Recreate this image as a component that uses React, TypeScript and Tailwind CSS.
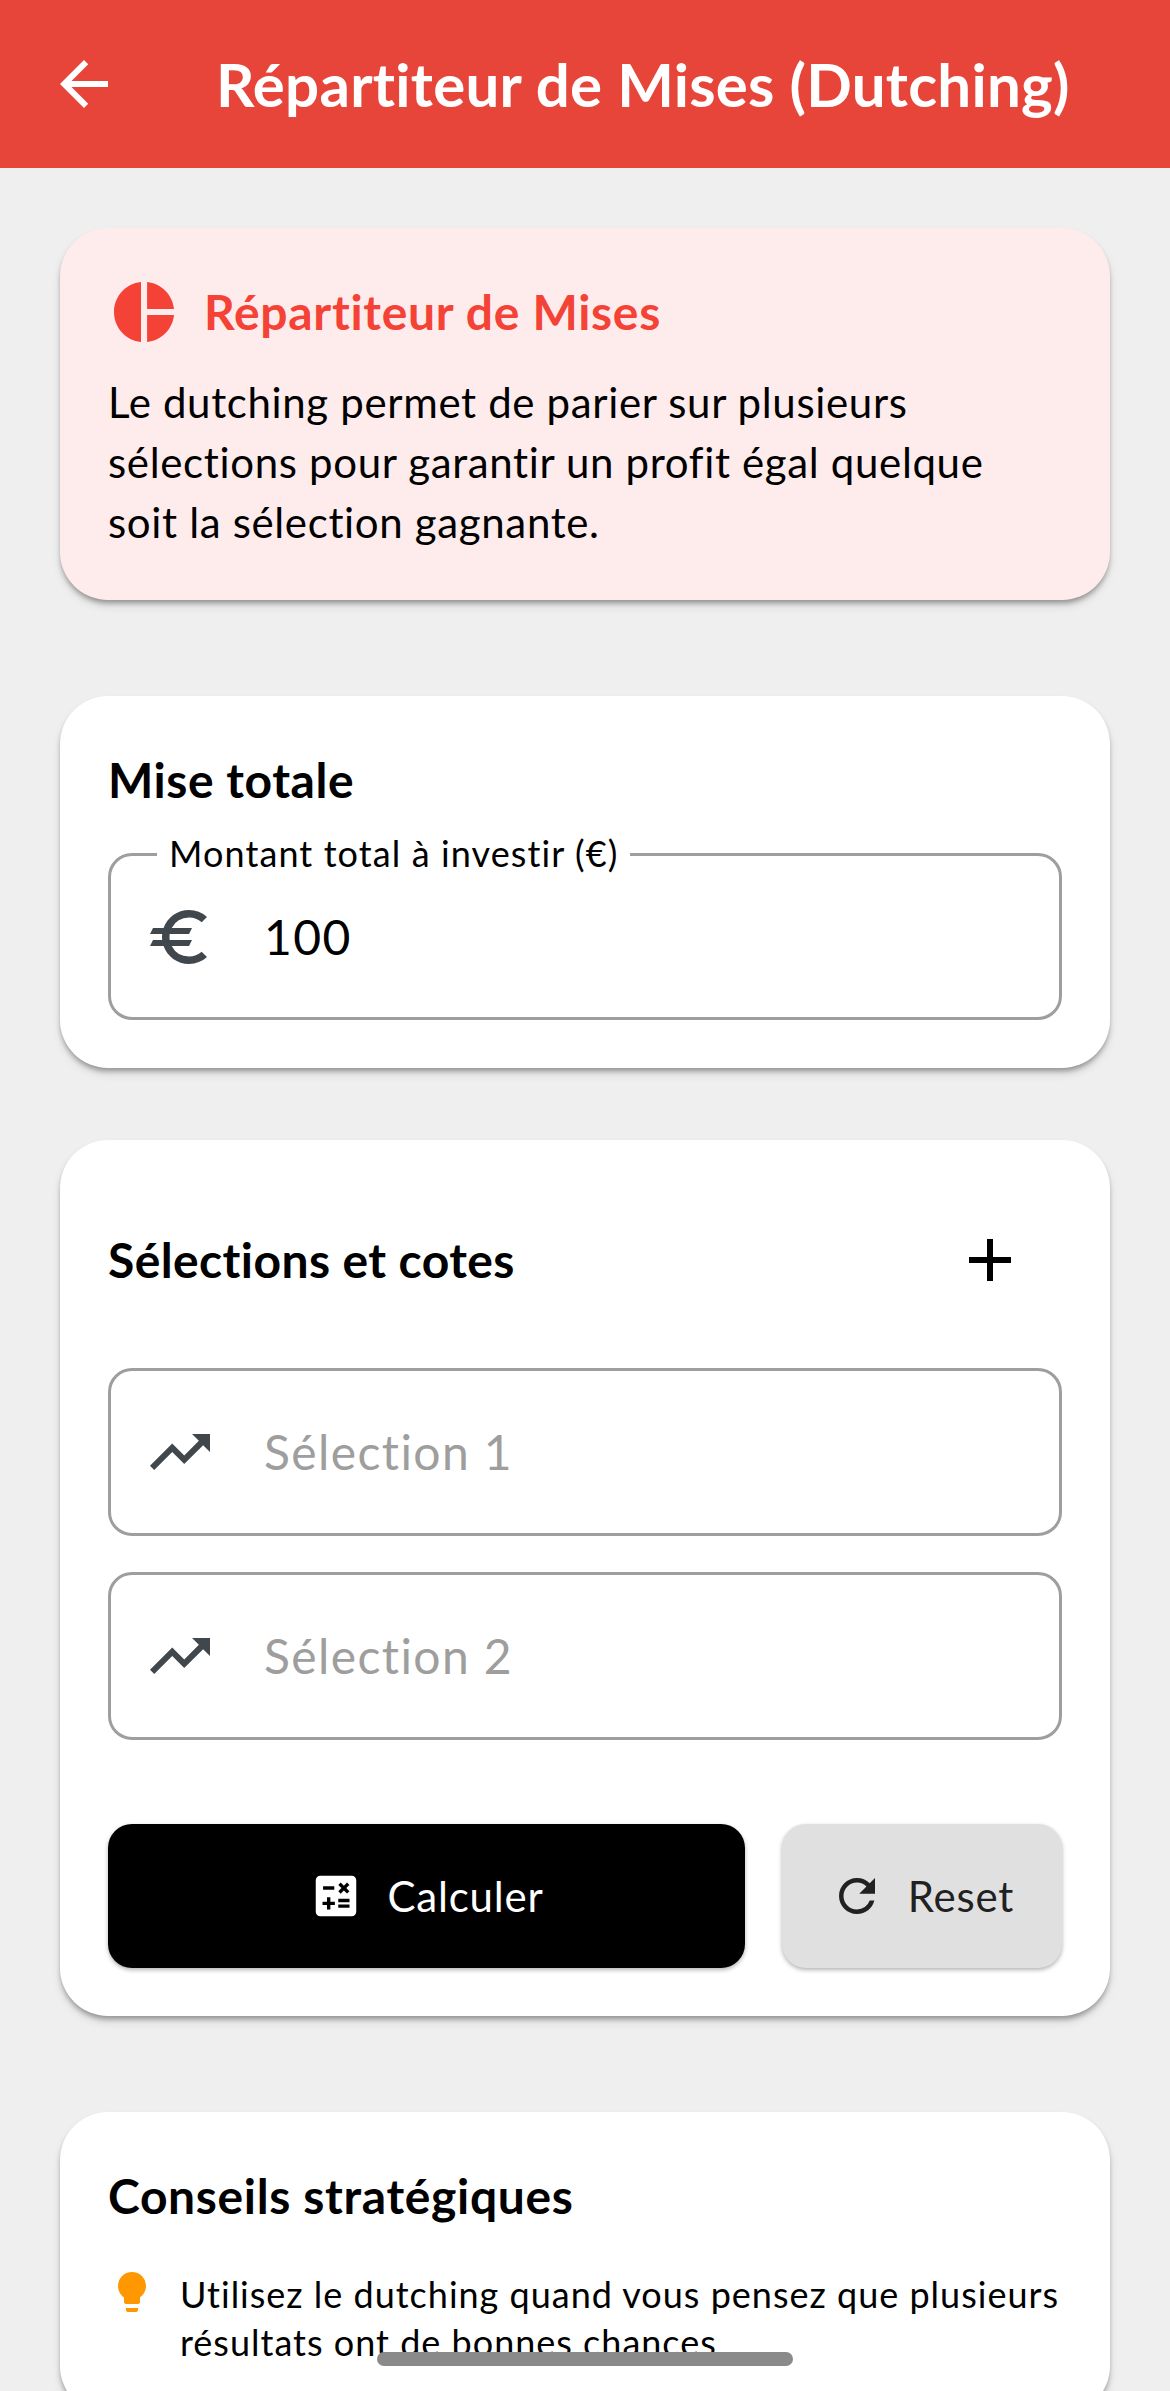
import { ReactNode } from "react";
import {
  MdAdd,
  MdArrowBack,
  MdCalculate,
  MdEuro,
  MdLightbulb,
  MdPieChart,
  MdRefresh,
  MdTrendingUp,
} from "react-icons/md";

function Card({ children, className = "" }: { children: ReactNode; className?: string }) {
  return (
    <section className={`rounded-[48px] p-[48px] shadow-[0_4px_5px_-1px_rgba(0,0,0,0.32),0_6px_10px_rgba(0,0,0,0.1)] ${className}`}>
      {children}
    </section>
  );
}

function Field({ icon, value, placeholder, label }: { icon: ReactNode; value?: string; placeholder?: string; label?: string }) {
  return (
    <div className={`relative flex items-center rounded-[24px] border-[3px] border-[#9e9e9e] pl-[33px] ${label ? "h-[167px]" : "h-[168px]"}`}>
      {label && (
        <label className="absolute left-[46px] top-[-25px] bg-white px-[12px] text-[36px] leading-[44px] tracking-[1.1px] text-black">
          {label}
        </label>
      )}
      <span className="text-[#41484d]">{icon}</span>
      <input
        readOnly
        value={value ?? ""}
        placeholder={placeholder}
        className="ml-[48px] min-w-0 flex-1 bg-transparent text-[48px] leading-[60px] tracking-[1.4px] text-black outline-none placeholder:text-[#9e9e9e]"
      />
    </div>
  );
}

export default function App() {
  return (
    <div className="relative h-[2391px] w-[1170px] overflow-hidden bg-[#efefef] font-['Lato',sans-serif] [font-variant-ligatures:none]">
      {/* Header */}
      <header className="flex h-[168px] items-center bg-[#e74539] pl-[48px] text-white">
        <MdArrowBack size={72} />
        <h1 className="ml-[96px] text-[60px] font-bold leading-[72px] tracking-[0.25px]">Répartiteur de Mises (Dutching)</h1>
      </header>

      <main className="px-[60px] pt-[60px]">
        {/* Intro */}
        <Card className="bg-[#feecec]">
          <div className="flex h-[72px] items-center text-[#f44336]">
            <MdPieChart size={72} className="shrink-0" />
            <h2 className="ml-[24px] text-[48px] font-bold leading-[60px] tracking-[0.7px]">Répartiteur de Mises</h2>
          </div>
          <p className="mt-[24px] text-[42px] leading-[60px] tracking-[0.65px] text-black">
            Le dutching permet de parier sur plusieurs sélections pour garantir un profit égal quelque soit la sélection gagnante.
          </p>
        </Card>

        {/* Mise totale */}
        <Card className="mt-[96px] bg-white">
          <h2 className="text-[48px] font-bold leading-[72px] tracking-[0.55px] text-black">Mise totale</h2>
          <div className="mt-[37px]">
            <Field icon={<MdEuro size={72} />} value="100" label="Montant total à investir (€)" />
          </div>
        </Card>

        {/* Sélections */}
        <Card className="mt-[72px] bg-white">
          <div className="flex h-[144px] items-center justify-between">
            <h2 className="text-[48px] font-bold leading-[60px] tracking-[0.4px] text-black">Sélections et cotes</h2>
            <button className="flex h-[144px] w-[144px] items-center justify-center text-black">
              <MdAdd size={72} />
            </button>
          </div>
          <div className="mt-[36px] flex flex-col gap-[36px]">
            <Field icon={<MdTrendingUp size={72} />} placeholder="Sélection 1" />
            <Field icon={<MdTrendingUp size={72} />} placeholder="Sélection 2" />
          </div>
          <div className="mt-[84px] flex gap-[37px]">
            <button className="flex h-[144px] w-[637px] items-center justify-center gap-[24px] rounded-[24px] bg-black text-[42px] tracking-[0.8px] text-white shadow-[0_2px_4px_rgba(0,0,0,0.3)]">
              <MdCalculate size={54} />
              Calculer
            </button>
            <button className="flex h-[144px] flex-1 items-center justify-center gap-[24px] rounded-[24px] bg-[#e0e0e0] text-[42px] tracking-[0.8px] text-[#212121] shadow-[0_2px_4px_rgba(0,0,0,0.3)]">
              <MdRefresh size={54} />
              Reset
            </button>
          </div>
        </Card>

        {/* Conseils */}
        <Card className="mt-[96px] bg-white">
          <h2 className="text-[48px] font-bold leading-[72px] tracking-[0.65px] text-black">Conseils stratégiques</h2>
          <div className="mt-[36px] flex gap-[24px]">
            <MdLightbulb size={48} className="shrink-0 text-[#ff9800]" />
            <p className="pt-[2px] text-[36px] leading-[48px] tracking-[1px] text-black">
              Utilisez le dutching quand vous pensez que plusieurs résultats ont de bonnes chances
            </p>
          </div>
        </Card>
      </main>

      {/* Home indicator */}
      <div className="absolute bottom-[25px] left-[377px] h-[14px] w-[416px] rounded-full bg-[#8a8a8a]" />
    </div>
  );
}
